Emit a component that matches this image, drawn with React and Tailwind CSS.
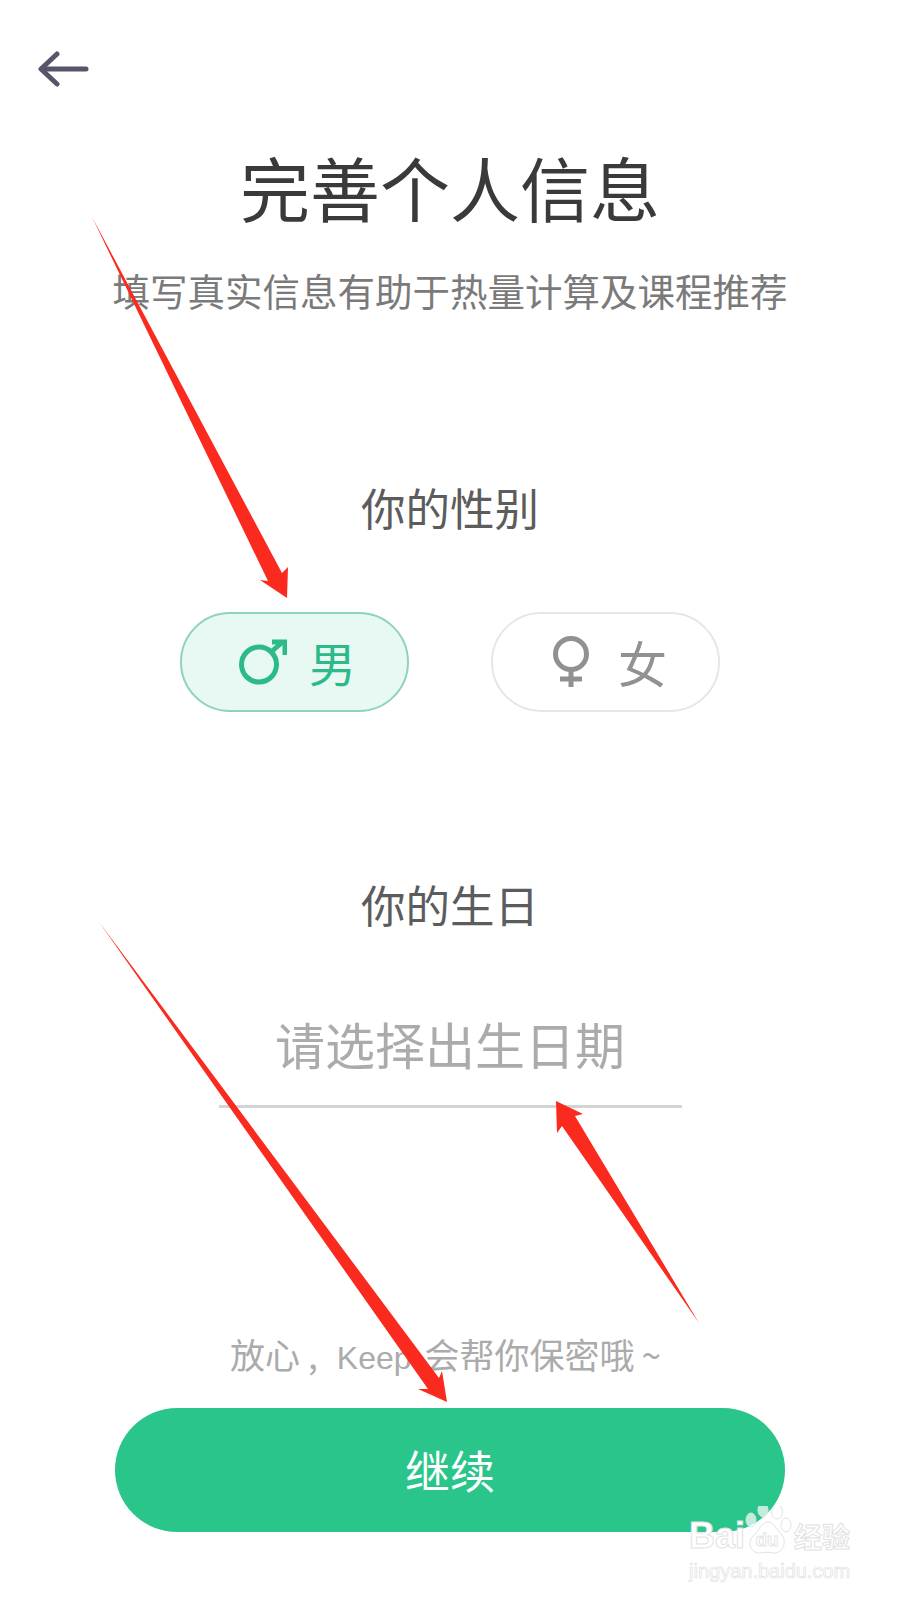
import React from 'react';

const CJK = "font-['Noto_Sans_CJK_SC','Noto_Sans',sans-serif]";

// Red annotation arrows drawn on top of the screenshot
const ARROWS = [
    "92,217 268,581 260,580 287,598 288,567 282,573",
    "99,922 428,1389 418,1389 447,1402 442,1371 439,1378",
    "699,1323 575,1116 583,1114 556,1101 557,1133 562,1126",
];

function BackIcon() {
    return (
        <svg width="52" height="38" viewBox="0 0 52 38" fill="none" stroke="#56566a" strokeWidth="5" strokeLinecap="round" strokeLinejoin="round">
            <path d="M48 18 H4" />
            <path d="M19 3 L3 18 L19 33" />
        </svg>
    );
}

function MaleIcon() {
    return (
        <svg width="48" height="46" viewBox="0 0 48 46" fill="none" stroke="#2cbb88" strokeWidth="5">
            <circle cx="20" cy="25.5" r="17.5" />
            <path d="M31 14 L44 2.5" />
            <path d="M33 3 H46 V16" />
        </svg>
    );
}

function FemaleIcon() {
    return (
        <svg width="42" height="52" viewBox="0 0 42 52" fill="none" stroke="#919191" strokeWidth="5">
            <circle cx="21" cy="18" r="15.5" />
            <path d="M21 33 V51" />
            <path d="M10 43 H32" />
        </svg>
    );
}

function Watermark() {
    return (
        <div className="absolute left-[689px] top-[1506px] w-[170px] h-[80px] pointer-events-none">
            <div className="flex items-end h-[50px]">
                <span className="w-[56px] font-['Liberation_Sans',sans-serif] font-bold text-[36px] leading-[40px] text-white [-webkit-text-stroke:1px_#e2e2e2]">Bai</span>
                <svg width="48" height="50" viewBox="0 0 48 50" className="shrink-0">
                    <g fill="#ffffff" fillOpacity="0.7" stroke="#e2e2e2" strokeWidth="1">
                        <ellipse cx="6" cy="14" rx="5" ry="7" />
                        <ellipse cx="18" cy="4" rx="5" ry="7" />
                        <ellipse cx="32" cy="6" rx="5.5" ry="7" />
                        <ellipse cx="41" cy="19" rx="5" ry="7" />
                        <path d="M23 16 C29 16 31 23 36 28 C43 35 38 48 28 47 C24 46 20 46 16 47 C6 48 1 37 9 29 C14 25 16 16 23 16 Z" />
                    </g>
                    <text x="22" y="40" textAnchor="middle" fontFamily="Liberation Sans" fontWeight="700" fontSize="19" fill="#ffffff" stroke="#e2e2e2" strokeWidth="0.8">du</text>
                </svg>
                <span className={`${CJK} font-bold text-[28px] leading-[40px] ml-[1px] text-white [-webkit-text-stroke:1px_#e2e2e2]`}>经验</span>
            </div>
            <div className="font-['Liberation_Sans',sans-serif] text-[20px] leading-[24px] mt-[3px] text-white [-webkit-text-stroke:0.7px_#e2e2e2] whitespace-nowrap">jingyan.baidu.com</div>
        </div>
    );
}

export default function App() {
    return (
        <div className={`relative w-[900px] h-[1600px] bg-white overflow-hidden ${CJK}`}>
            <div className="pl-[38px] pt-[51px]">
                <BackIcon />
            </div>

            <div className="flex flex-col items-center">
                <h1 className="mt-[58px] text-[70px] leading-[80px] font-normal text-[#3a3a3a]">完善个人信息</h1>
                <p className="mt-[41px] text-[37.5px] leading-[44px] text-[#7a7a7a] whitespace-nowrap">填写真实信息有助于热量计算及课程推荐</p>

                <div className="mt-[169px] text-[44.5px] leading-[52px] text-[#5c5c5c]">你的性别</div>
                <div className="mt-[79px] flex gap-[82px]">
                    <div className="w-[229px] h-[100px] pl-[6px] rounded-full border-2 border-[#8fd3bb] bg-[#e8f8f2] flex items-center justify-center gap-[22px]">
                        <MaleIcon />
                        <span className="text-[47px] leading-[52px] text-[#2cbb88]">男</span>
                    </div>
                    <div className="w-[229px] h-[100px] pl-[6px] rounded-full border-2 border-[#e6e6e6] bg-white flex items-center justify-center gap-[26px]">
                        <FemaleIcon />
                        <span className="text-[49px] leading-[52px] text-[#919191]">女</span>
                    </div>
                </div>

                <div className="mt-[166px] text-[44.5px] leading-[52px] text-[#5c5c5c]">你的生日</div>
                <div className="mt-[83px] w-[463px] pb-[32px] border-b-[3px] border-[#d4d4d4] text-center text-[50px] leading-[60px] text-[#ababab]">请选择出生日期</div>

                <div className="mt-[226px] pr-[9px] flex items-baseline text-[35px] leading-[40px] text-[#ababab] whitespace-nowrap">
                    <span>放心</span>
                    <span className="ml-[8px]">,</span>
                    <span className="ml-[19px] font-['Liberation_Sans',sans-serif] text-[32px]">Keep</span>
                    <span className="ml-[13px]">会帮你保密哦</span>
                    <span className="ml-[7px]">~</span>
                </div>
                <button className="mt-[30px] w-[670px] h-[124px] rounded-full bg-[#29c58a] text-white text-[45px] leading-[52px]">继续</button>
            </div>

            <svg className="absolute inset-0 pointer-events-none" width="900" height="1600" viewBox="0 0 900 1600">
                {ARROWS.map((pts, i) => (
                    <polygon key={i} points={pts} fill="#fb2a1e" />
                ))}
            </svg>

            <Watermark />
        </div>
    );
}
